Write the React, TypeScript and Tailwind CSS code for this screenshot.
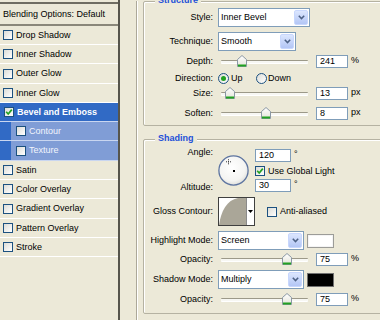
import React from "react";

const Box = ({ checked = false }: { checked?: boolean }) => (
  <span className="w-[10px] h-[10px] shrink-0 border border-[#1c5180] bg-linear-to-br from-[#dcdcd7] to-white flex items-center justify-center">
    {checked && (
      <svg width="8" height="8" viewBox="0 0 8 8">
        <path d="M1.2 3.8 L3.2 6 L6.8 1.6" stroke="#21a121" strokeWidth="1.7" fill="none" />
      </svg>
    )}
  </span>
);

const Radio = ({ on = false }: { on?: boolean }) => (
  <span className="w-[11px] h-[11px] shrink-0 rounded-full border border-[#1c5180] bg-linear-to-br from-[#dcdcd7] to-white flex items-center justify-center">
    {on && <span className="w-[5px] h-[5px] rounded-full bg-[#21a121]" />}
  </span>
);

const Chevron = () => (
  <span className="w-[14px] self-stretch m-[1px] rounded-[2px] border border-[#c8d7fd] bg-linear-to-b from-[#dce6fe] to-[#b3c6f5] flex items-center justify-center">
    <svg width="7" height="5" viewBox="0 0 7 5">
      <path d="M0.8 0.8 L3.5 3.6 L6.2 0.8" stroke="#4d6185" strokeWidth="1.5" fill="none" />
    </svg>
  </span>
);

const Select = ({ value, w }: { value: string; w: string }) => (
  <div className={`${w} h-[19px] ml-[5px] bg-white border border-[#7f9db9] flex items-stretch`}>
    <span className="flex-1 pl-[2px] flex items-center">{value}</span>
    <Chevron />
  </div>
);

const Num = ({ v, w = "w-[32px]" }: { v: string; w?: string }) => (
  <div className={`${w} h-[13px] bg-white border border-[#7f9db9] pl-[3px] flex items-center leading-[11px]`}>{v}</div>
);

const Thumb = () => (
  <svg width="10" height="12" viewBox="0 0 10 12">
    <defs>
      <linearGradient id="thumbg" x1="0" y1="0" x2="0" y2="1">
        <stop offset="0" stopColor="#ffffff" />
        <stop offset="1" stopColor="#e4e4da" />
      </linearGradient>
    </defs>
    <path d="M0.5 4.5 L5 0.5 L9.5 4.5 L9.5 11.5 L0.5 11.5 Z" fill="url(#thumbg)" stroke="#8b98a4" />
    <rect x="1" y="9.5" width="8" height="2" fill="#21a121" />
  </svg>
);

const Slider = ({ pos }: { pos: number }) => (
  <div className="relative w-[95px] h-[13px] ml-[5px] flex items-center">
    <div className="ml-[3px] w-[87px] h-[3px] rounded-[1px] border-t border-[#9c9989] bg-[#f7f7f3] shadow-[0_1px_0_#fff]" />
    <span className="absolute top-0" style={{ left: pos - 5 }}>
      <Thumb />
    </span>
  </div>
);

const Label = ({ t }: { t: string }) => <div className="w-[69px] shrink-0 text-right">{t}</div>;

const items = [
  { label: "Drop Shadow", h: 19 },
  { label: "Inner Shadow", h: 19 },
  { label: "Outer Glow", h: 20 },
  { label: "Inner Glow", h: 19 },
  { label: "Bevel and Emboss", h: 19, sel: true },
  { label: "Contour", h: 19, sub: true },
  { label: "Texture", h: 20, sub: true },
  { label: "Satin", h: 19 },
  { label: "Color Overlay", h: 19 },
  { label: "Gradient Overlay", h: 20 },
  { label: "Pattern Overlay", h: 19 },
  { label: "Stroke", h: 19 },
];

const SliderRow = ({ label, pos, v, unit, mt }: { label: string; pos: number; v: string; unit: string; mt: string }) => (
  <div className={`${mt} h-[13px] flex items-center`}>
    <Label t={label} />
    <Slider pos={pos} />
    <div className="ml-[3px]">
      <Num v={v} />
    </div>
    <span className="ml-[3px] -mt-[2px]">{unit}</span>
  </div>
);

export default function App() {
  return (
    <div className="w-[380px] h-[320px] overflow-hidden bg-[#ece9d8] flex text-[9px] leading-[11px] text-black font-['Liberation_Sans',Arial,sans-serif]">
      {/* Left list */}
      <div className="w-[120px] shrink-0 h-full border-r-2 border-[#56554c] flex flex-col">
        <div className="h-[2px]" />
        <div className="h-[2px] bg-[#6f6d62]" />
        <div className="h-[20px] pl-[3px] flex items-center">Blending Options: Default</div>
        <div className="h-[2px] bg-[#8a877a]" />
        {items.map((it) => (
          <div
            key={it.label}
            className={`${it.h === 20 ? "h-[20px]" : "h-[19px]"} border-b ${
              it.sel || it.sub ? "border-[#c9d6f0] bg-[#316ac5]" : "border-white"
            } flex items-stretch`}
          >
            {it.sub ? (
              <div className="ml-[11px] flex-1 bg-[#809dd6] pl-[5px] flex items-center gap-[3px] text-[#f2f5fc]">
                <Box />
                <span>{it.label}</span>
              </div>
            ) : (
              <div
                className={`flex-1 flex items-center gap-[3px] ${
                  it.sel ? "pl-[4px] font-bold text-white" : "pl-[3px]"
                }`}
              >
                <Box checked={it.sel} />
                <span>{it.label}</span>
              </div>
            )}
          </div>
        ))}
      </div>

      {/* Right side */}
      <div className="flex-1 min-w-0 h-full pl-[16px]">
        <div className="h-full border-l border-[#aca899] shadow-[inset_1px_0_0_#fff] pl-[6px]">
          {/* Structure */}
          <div className="relative mt-[1px] w-[300px] h-[125px] border border-[#b5b2a2] rounded-[2px] shadow-[inset_1px_1px_0_#fff]">
            <span className="absolute left-[11px] top-[-7px] px-[3px] bg-[#ece9d8] font-bold text-[#1c50d8] leading-[10px]">
              Structure
            </span>
            <div className="mt-[6px] h-[19px] flex items-center">
              <Label t="Style:" />
              <Select value="Inner Bevel" w="w-[92px]" />
            </div>
            <div className="mt-[5px] h-[19px] flex items-center">
              <Label t="Technique:" />
              <Select value="Smooth" w="w-[78px]" />
            </div>
            <SliderRow mt="mt-[4px]" label="Depth:" pos={24} v="241" unit="%" />
            <div className="mt-[4px] h-[13px] flex items-center">
              <Label t="Direction:" />
              <div className="ml-[5px] w-[38px] flex items-center gap-[2px]">
                <Radio on />
                <span>Up</span>
              </div>
              <div className="flex items-center gap-[1px]">
                <Radio />
                <span>Down</span>
              </div>
            </div>
            <SliderRow mt="mt-[2px]" label="Size:" pos={12} v="13" unit="px" />
            <SliderRow mt="mt-[7px]" label="Soften:" pos={48} v="8" unit="px" />
          </div>

          {/* Shading */}
          <div className="relative mt-[13px] w-[300px] h-[175px] border border-[#b5b2a2] rounded-[2px] shadow-[inset_1px_1px_0_#fff]">
            <span className="absolute left-[11px] top-[-7px] px-[3px] bg-[#ece9d8] font-bold text-[#1c50d8] leading-[10px]">
              Shading
            </span>
            <div className="mt-[9px] flex items-start">
              <div className="w-[69px] shrink-0 -mt-[3px] h-[48px] flex flex-col justify-between items-end">
                <div className="h-[13px] flex items-center">Angle:</div>
                <div className="h-[13px] flex items-center">Altitude:</div>
              </div>
              <div className="ml-[5px] mt-[6px]">
                <svg width="31" height="31" viewBox="0 0 31 31">
                  <defs>
                    <radialGradient id="dialg" cx="0.45" cy="0.4" r="0.65">
                      <stop offset="0" stopColor="#ffffff" />
                      <stop offset="0.7" stopColor="#f4f4f2" />
                      <stop offset="1" stopColor="#d9d9d4" />
                    </radialGradient>
                  </defs>
                  <circle cx="15.5" cy="15.5" r="14.6" fill="url(#dialg)" stroke="#5d74a0" strokeWidth="1.3" />
                  <path d="M10.5 4.3 V9.3 M8 6.8 H13" stroke="#333" strokeWidth="1" strokeDasharray="1 1" />
                  <rect x="15" y="15" width="2" height="2" fill="#000" />
                </svg>
              </div>
              <div className="ml-[6px] flex flex-col">
                <div className="h-[13px] flex items-center">
                  <Num v="120" w="w-[36px]" />
                  <span className="ml-[3px] -mt-[3px]">°</span>
                </div>
                <div className="mt-[3px] h-[12px] flex items-center gap-[3px]">
                  <Box checked />
                  <span>Use Global Light</span>
                </div>
                <div className="mt-[2px] h-[13px] flex items-center">
                  <Num v="30" w="w-[36px]" />
                  <span className="ml-[3px] -mt-[3px]">°</span>
                </div>
              </div>
            </div>
            <div className="mt-[3px] h-[29px] flex items-center">
              <Label t="Gloss Contour:" />
              <div className="ml-[5px] w-[37px] h-[29px] border border-[#3f3f3f] bg-white flex">
                <svg width="27" height="27" viewBox="0 0 27 27">
                  <path d="M0 27 C 2 13, 8 2, 19 0 L 27 0 L 27 27 Z" fill="#aaa698" />
                </svg>
                <div className="flex-1 border-l border-[#8a8a8a] flex items-center justify-center">
                  <svg width="5" height="3" viewBox="0 0 5 3">
                    <path d="M0 0 H5 L2.5 3 Z" fill="#000" />
                  </svg>
                </div>
              </div>
              <div className="ml-[12px] flex items-center gap-[3px]">
                <Box />
                <span>Anti-aliased</span>
              </div>
            </div>
            <div className="mt-[5px] h-[19px] flex items-center">
              <Label t="Highlight Mode:" />
              <Select value="Screen" w="w-[86px]" />
              <div className="ml-[3px] w-[27px] h-[14px] border border-[#9c9c98] bg-white shadow-[inset_0_0_0_1px_#f4f4f4]" />
            </div>
            <SliderRow mt="mt-[3px]" label="Opacity:" pos={69} v="75" unit="%" />
            <div className="mt-[4px] h-[19px] flex items-center">
              <Label t="Shadow Mode:" />
              <Select value="Multiply" w="w-[86px]" />
              <div className="ml-[3px] w-[27px] h-[14px] border border-[#707070] bg-black" />
            </div>
            <SliderRow mt="mt-[4px]" label="Opacity:" pos={69} v="75" unit="%" />
          </div>
        </div>
      </div>
    </div>
  );
}
